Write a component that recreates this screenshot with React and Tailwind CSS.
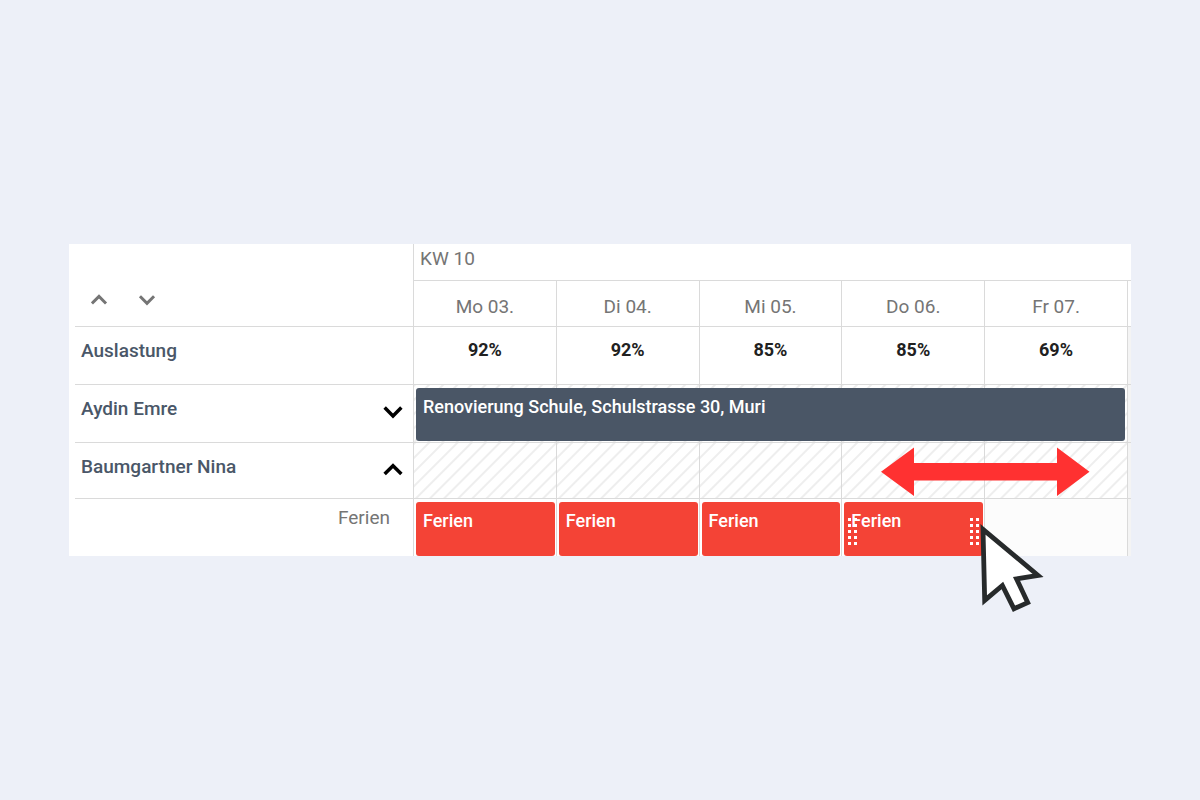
import { useState } from 'react'

const DAYS = [
  { id: 'mo', label: 'Mo 03.', load: '92%' },
  { id: 'di', label: 'Di 04.', load: '92%' },
  { id: 'mi', label: 'Mi 05.', load: '85%' },
  { id: 'do', label: 'Do 06.', load: '85%' },
  { id: 'fr', label: 'Fr 07.', load: '69%' },
]

const VACATION_DAYS = ['mo', 'di', 'mi', 'do']

const LINE = 'border-[#dadada]'
const HATCH =
  'bg-[repeating-linear-gradient(135deg,#eeeeee_0px,#eeeeee_1px,#ffffff_2px,#ffffff_9px,#eeeeee_10px)]'

function Chevron({ up, size }) {
  return (
    <svg width={size} height={size} viewBox="0 0 24 24" fill="none" aria-hidden="true">
      <path
        d={up ? 'M7.5 13.8 L12 9.3 L16.5 13.8' : 'M7.5 10 L12 14.5 L16.5 10'}
        stroke="currentColor"
        strokeWidth="2.2"
        strokeLinecap="square"
      />
    </svg>
  )
}

function EdgeCell({ className = '' }) {
  return <td className={`border-l border-b ${LINE} bg-[#f4f4f4] ${className}`} />
}

function Grip({ className }) {
  return (
    <svg width="9" height="27" viewBox="0 0 9 27" className={`absolute top-4 ${className}`} aria-hidden="true">
      {[0, 6, 12, 18, 24].map((y) => (
        <g key={y} fill="#ffffff">
          <rect x="0" y={y} width="3" height="3" />
          <rect x="6" y={y} width="3" height="3" />
        </g>
      ))}
    </svg>
  )
}

function ResizeArrow() {
  return (
    <svg
      width="209"
      height="49"
      viewBox="0 0 209 49"
      className="absolute left-[39px] top-1 z-10 max-w-none"
      aria-hidden="true"
    >
      <path
        d="M0 24.7 L33 0.5 V16 H176 V0.5 L208.5 24.7 L176 49 V33.5 H33 V49 Z"
        fill="#ff3131"
      />
    </svg>
  )
}

function Pointer() {
  return (
    <svg
      width="68"
      height="92"
      viewBox="978 522 68 92"
      className="absolute left-[134px] top-5 z-20 max-w-none"
      aria-hidden="true"
    >
      <path
        d="M983 529.3 L1038 575.4 L1016.5 578.8 L1027.7 602.6 L1014 608.8 L1002.4 585.5 L984.7 600.4 Z"
        fill="#ffffff"
        stroke="#272a2b"
        strokeWidth="4.8"
        strokeMiterlimit="10"
      />
    </svg>
  )
}

function PersonCell({ name, open, onToggle }) {
  return (
    <th scope="row" className={`border-b ${LINE} p-0 align-top`}>
      <div className="flex items-start justify-between pr-px pl-1.5">
        <span className="pt-3 text-[19px] leading-6 font-medium text-[#4a5768]">{name}</span>
        <button type="button" onClick={onToggle} aria-label={name} aria-expanded={open} className="pt-2 text-black">
          <Chevron up={open} size={38} />
        </button>
      </div>
    </th>
  )
}

export default function App() {
  const [open, setOpen] = useState({ aydin: false, baumgartner: true })

  function toggle(key) {
    setOpen((prev) => ({ ...prev, [key]: !prev[key] }))
  }

  function setAll(value) {
    setOpen({ aydin: value, baumgartner: value })
  }

  return (
    <main className="flex min-h-screen items-center bg-[#edf0f8] px-[69px] font-[Roboto,sans-serif]">
      <div className="w-full bg-white pl-1.5">
        <table className="w-full table-fixed border-separate border-spacing-0 text-left">
          <colgroup>
            <col className="w-[338px]" />
            {DAYS.map((day) => (
              <col key={day.id} />
            ))}
            <col className="w-1" />
          </colgroup>
          <thead>
            <tr className="h-[37px]">
              <td rowSpan={2} className={`border-b ${LINE} px-2 pb-2.5 align-bottom`}>
                <div className="flex gap-4 text-[#757575]">
                  <button type="button" onClick={() => setAll(false)} aria-label="Alle zuklappen">
                    <Chevron up size={32} />
                  </button>
                  <button type="button" onClick={() => setAll(true)} aria-label="Alle aufklappen">
                    <Chevron size={32} />
                  </button>
                </div>
              </td>
              <th
                colSpan={6}
                className={`border-b border-l ${LINE} px-1.5 pt-0.5 pb-2 text-[19px] leading-6 font-normal text-[#757575]`}
              >
                KW 10
              </th>
            </tr>
            <tr className="h-[46px]">
              {DAYS.map((day) => (
                <th
                  key={day.id}
                  scope="col"
                  className={`border-b border-l ${LINE} pt-1.5 text-center text-[19px] leading-6 font-normal text-[#757575]`}
                >
                  {day.label}
                </th>
              ))}
              <td className={`border-b border-l ${LINE}`} />
            </tr>
          </thead>
          <tbody>
            <tr className="h-[58px]">
              <th
                scope="row"
                className={`border-b ${LINE} px-1.5 pt-3 align-top text-[19px] leading-6 font-medium text-[#4a5768]`}
              >
                Auslastung
              </th>
              {DAYS.map((day) => (
                <td
                  key={day.id}
                  className={`border-b border-l ${LINE} pt-[11px] text-center align-top text-[18px] leading-6 font-bold text-[#212121]`}
                >
                  {day.load}
                </td>
              ))}
              <EdgeCell />
            </tr>

            <tr className="h-[58px]">
              <PersonCell name="Aydin Emre" open={open.aydin} onToggle={() => toggle('aydin')} />
              {DAYS.map((day, i) => (
                <td key={day.id} className={`relative border-b border-l ${LINE} ${HATCH} p-0`}>
                  {i === 0 && (
                    <button
                      type="button"
                      className="absolute top-[3px] left-0.5 z-10 h-[53px] w-[500%] rounded-[3px] bg-[#4a5666] px-[7px] pb-4 text-left text-[18px] leading-6 font-medium text-white"
                    >
                      Renovierung Schule, Schulstrasse 30, Muri
                    </button>
                  )}
                </td>
              ))}
              <EdgeCell />
            </tr>

            <tr className="h-[56px]">
              <PersonCell name="Baumgartner Nina" open={open.baumgartner} onToggle={() => toggle('baumgartner')} />
              {DAYS.map((day) => (
                <td key={day.id} className={`relative border-b border-l ${LINE} ${HATCH} p-0`}>
                  {day.id === 'do' && <ResizeArrow />}
                </td>
              ))}
              <EdgeCell />
            </tr>

            {open.baumgartner && (
              <tr className="h-[57px]">
                <th
                  scope="row"
                  className="pt-[7px] pr-[23px] text-right align-top text-[19px] leading-6 font-normal text-[#757575]"
                >
                  Ferien
                </th>
                {DAYS.map((day) =>
                  VACATION_DAYS.includes(day.id) ? (
                    <td key={day.id} className={`border-l ${LINE} pt-[3px] pr-px pb-0 pl-0.5`}>
                      <button
                        type="button"
                        className="relative block h-[54px] w-full rounded-[3px] bg-[#f44336] px-[7px] pb-4 text-left text-[18px] leading-6 font-medium text-white"
                      >
                        Ferien
                        {day.id === 'do' && (
                          <>
                            <Grip className="left-1" />
                            <Grip className="right-1" />
                            <Pointer />
                          </>
                        )}
                      </button>
                    </td>
                  ) : (
                    <td key={day.id} className={`border-l ${LINE} bg-[#fcfcfc]`} />
                  ),
                )}
                <EdgeCell className="border-b-0" />
              </tr>
            )}
          </tbody>
        </table>
      </div>
    </main>
  )
}
